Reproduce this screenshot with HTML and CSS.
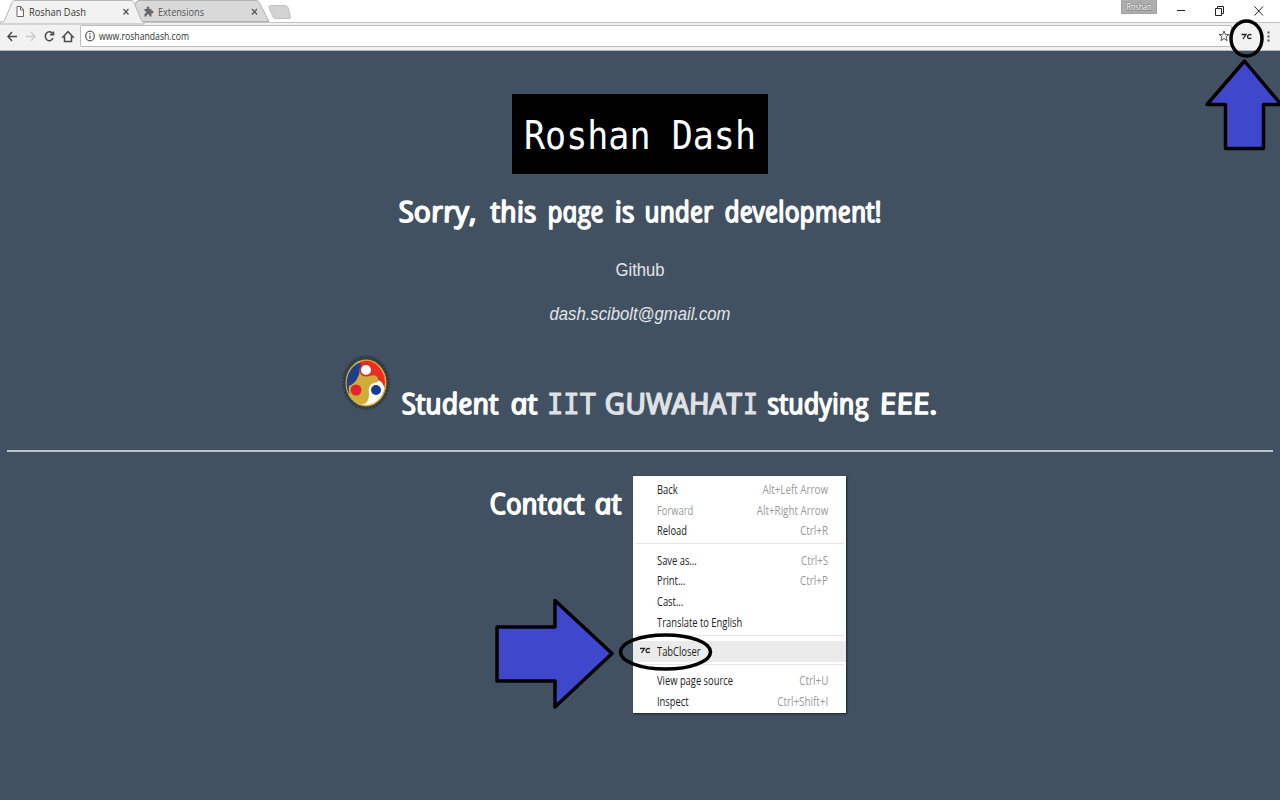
FILE: index.html
```html
<!DOCTYPE html>
<html lang="en">
<head>
<meta charset="utf-8">
<title>Roshan Dash</title>
<link rel="stylesheet" href="styles.css">
</head>
<body>
<header class="browser">
  <div class="tabstrip">
    <svg class="tabs" width="300" height="23" viewBox="0 0 300 23">
      <path class="tab-back" d="M134 22 L136 2 Q137 .5 139 .5 H256 Q258 .5 259 2 L269 21.5 H141z"/>
      <path class="tab-new" d="M270.5 5.5 H285 Q287 5.500 288 7.500 L290.500 17 Q291 18.500 289 18.500 H276 Q274 18.500 273 17 L269 7.500 Q268.500 5.500 270.500 5.500z"/>
      <path class="tab-front" d="M0 22 H2 Q4 22 5 19.500 L12 2.500 Q13 .5 15 .5 H131 Q133 .5 134 2.500 L141 19.500 Q142 22 144 22 V24 H0z"/>
      <path class="line" d="M144 22.500 H300"/>
      <path class="doc" d="M17 6.500 H21 L23.500 9.500 V16.500 H17z M20.500 6.500 V10 H23.500"/>
      <path class="puzzle" d="M144.500 9 H147 Q146 6.500 148 6.500 T149.200 9 H151.500 V11 Q153.500 10 153.500 12 T151.500 13 V16.500 H149.500 Q149.500 14.300 148 14.300 T146.500 16.500 H144.500 V13.800 Q146.200 13.500 146.200 12.300 T144.500 11z"/>
      <path class="close" d="M123.500 9 l5 5.500 m0 -5.500 l-5 5.500 M252 9 l5 5.500 m0 -5.500 l-5 5.500"/>
      <text class="ui" x="29" y="15.500" textLength="57" lengthAdjust="spacingAndGlyphs">Roshan Dash</text>
      <text class="ui muted" x="158" y="15.500" textLength="46" lengthAdjust="spacingAndGlyphs">Extensions</text>
    </svg>
    <div class="user"><svg width="34" height="13"><text x="4.500" y="9.500" textLength="25" lengthAdjust="spacingAndGlyphs">Roshan</text></svg></div>
    <svg class="window-buttons" width="100" height="22" viewBox="1170 0 100 22">
      <path d="M1177 10.500 h8 M1215.500 8.500 h6 v7 h-6z M1217.500 8 v-1.500 h6 v7 h-1.500 M1254.500 6.500 l8.500 9 m0 -9 l-8.500 9"/>
    </svg>
  </div>
  <div class="toolbar">
    <svg class="nav" width="80" height="28" viewBox="0 22 80 28">
      <path d="M17 36.500 H8 M12 32 L8 36.500 L12 41"/>
      <path class="disabled" d="M26 36.500 H35 M31 32 L35 36.500 L31 41"/>
      <path d="M52.500 33.500 A4 4.500 0 1 0 53 38 M53.500 31.500 V34.800 H50"/>
      <path d="M63 37 L68 31.500 L73 37 H71.500 V41.500 H64.500 V37z"/>
    </svg>
    <div class="address">
      <svg width="120" height="20" viewBox="81 26 120 20">
        <ellipse class="info" cx="90" cy="36" rx="4.300" ry="4.800"/>
        <path class="info" d="M90 35.500 v3.200 M90 33 v1.200"/>
        <text class="ui" x="99" y="39.800" textLength="90" lengthAdjust="spacingAndGlyphs">www.roshandash.com</text>
      </svg>
      <svg class="star" width="12" height="12" viewBox="0 0 12 12"><path d="M6 1 L7.300 4.500 H11 L8 6.800 L9.100 10.700 L6 8.500 L2.900 10.700 L4 6.800 L1 4.500 H4.700z"/></svg>
    </div>
    <svg class="extras" width="48" height="28" viewBox="1232 22 48 28">
      <path class="tc" d="M1241.500 34.500 h4.500 l-3 4.500 M1251.500 35 q-3 -1.500 -4 1.500 q0 3 4 1.500"/>
      <path class="dots" d="M1267.500 31.500h2v2h-2z M1267.500 35.500h2v2h-2z M1267.500 39.500h2v2h-2z"/>
    </svg>
  </div>
</header>

<main class="page">
  <h1 class="name"><svg width="256" height="80"><text x="12" y="55" textLength="232" lengthAdjust="spacingAndGlyphs">Roshan Dash</text></svg></h1>

  <h2 class="sorry"><svg width="500" height="40" viewBox="390 193 500 40">
    <g class="comic">
      <text transform="translate(400 221.500) skewX(11)" textLength="78" lengthAdjust="spacingAndGlyphs">Sorry,</text>
      <text transform="translate(492 221.500) skewX(11)" textLength="46" lengthAdjust="spacingAndGlyphs">this</text>
      <text transform="translate(549 221.500) skewX(11)" textLength="56" lengthAdjust="spacingAndGlyphs">page</text>
      <text transform="translate(616 221.500) skewX(11)" textLength="20" lengthAdjust="spacingAndGlyphs">is</text>
      <text transform="translate(646 221.500) skewX(11)" textLength="69" lengthAdjust="spacingAndGlyphs">under</text>
      <text transform="translate(726 221.500) skewX(11)" textLength="157" lengthAdjust="spacingAndGlyphs">development!</text>
    </g>
  </svg></h2>

  <p class="link github"><svg width="60" height="26"><text x="5.500" y="19" textLength="49" lengthAdjust="spacingAndGlyphs">Github</text></svg></p>
  <p class="link email"><svg width="190" height="26"><text x="4.500" y="19" textLength="181" lengthAdjust="spacingAndGlyphs">dash.scibolt@gmail.com</text></svg></p>

  <h2 class="student"><svg width="610" height="76" viewBox="335 350 610 76">
    <ellipse class="ring" cx="366" cy="382.500" rx="22" ry="25.500"/>
    <ellipse cx="366" cy="383" rx="20.500" ry="23.500" fill="#d0ac38"/>
    <ellipse cx="366" cy="383" rx="19" ry="22" fill="#fffef2"/>
    <path d="M361 362 A19 22 0 0 0 349 394 L362 388 L364 366z" fill="#213f87"/>
    <path d="M360 362 A19 22 0 0 1 384.500 388 Q382 378 372 380 L361 366z" fill="#ef2c20"/>
    <path d="M360 368 Q360 374 357 379 Q354 384 349 386 Q348 392 351 397 Q357 405 364 404 Q369 402 369 394 Q367 383 378 382 Q379 374 371 375.500 Q364 377 360 368z" fill="#d0ac38"/>
    <circle cx="366" cy="370" r="5.800" fill="#fff" stroke="#e42c24" stroke-width="1.500"/>
    <circle cx="356" cy="390" r="5.500" fill="#e5232e"/>
    <circle cx="376" cy="390" r="7" fill="#fffef2"/>
    <circle cx="376" cy="390" r="5" fill="#163d91"/>
    <g class="comic">
      <text transform="translate(403 413.500) skewX(11)" textLength="97" lengthAdjust="spacingAndGlyphs">Student</text>
      <text transform="translate(512 413.500) skewX(11)" textLength="27" lengthAdjust="spacingAndGlyphs">at</text>
      <text class="soft mono" transform="translate(547 413.500)" textLength="49" lengthAdjust="spacingAndGlyphs">IIT</text>
      <text class="soft" transform="translate(606 413.500) skewX(11)" textLength="137" lengthAdjust="spacingAndGlyphs">GUWAHAT</text>
      <text class="soft mono" transform="translate(743 413.500)" textLength="15" lengthAdjust="spacingAndGlyphs">I</text>
      <text transform="translate(769 413.500) skewX(11)" textLength="101" lengthAdjust="spacingAndGlyphs">studying</text>
      <text transform="translate(881 413.500) skewX(11)" textLength="58" lengthAdjust="spacingAndGlyphs">EEE.</text>
    </g>
  </svg></h2>

  <hr class="rule">

  <h2 class="contact"><svg width="300" height="40" viewBox="480 485 300 40">
    <g class="comic">
      <text transform="translate(491 513.500) skewX(11)" textLength="95" lengthAdjust="spacingAndGlyphs">Contact</text>
      <text transform="translate(596 513.500) skewX(11)" textLength="27" lengthAdjust="spacingAndGlyphs">at</text>
    </g>
  </svg></h2>
</main>

<nav class="menu">
  <div class="item"><span>Back</span><kbd>Alt+Left Arrow</kbd></div>
  <div class="item off"><span>Forward</span><kbd>Alt+Right Arrow</kbd></div>
  <div class="item"><span>Reload</span><kbd>Ctrl+R</kbd></div>
  <div class="sep"></div>
  <div class="item"><span>Save as...</span><kbd>Ctrl+S</kbd></div>
  <div class="item"><span>Print...</span><kbd>Ctrl+P</kbd></div>
  <div class="item"><span>Cast...</span></div>
  <div class="item"><span>Translate to English</span></div>
  <div class="sep"></div>
  <div class="item active"><svg class="item-icon" width="12" height="8"><path class="tc" d="M1 1.500 h4.500 l-3 4.500 M11 2 q-3 -1.500 -4 1.500 q0 3 4 1.500"/></svg><span>TabCloser</span></div>
  <div class="sep"></div>
  <div class="item"><span>View page source</span><kbd>Ctrl+U</kbd></div>
  <div class="item"><span>Inspect</span><kbd>Ctrl+Shift+I</kbd></div>
</nav>

<svg class="marks" width="1280" height="800">
  <ellipse cx="1246.500" cy="38.500" rx="15.500" ry="17.500"/>
  <ellipse cx="665.500" cy="652" rx="45" ry="17"/>
  <path class="arrow" d="M1244.500 61 L1281 104.500 H1263.500 V148.500 H1225.500 V104.500 H1207z"/>
  <path class="arrow" d="M555 600.500 L612 653.500 L555 707 V681 H497 V627 H555z"/>
</svg>
</body>
</html>
```
FILE: styles.css
```css
* { box-sizing: border-box; }
body {
  margin: 0;
  width: 1280px;
  height: 800px;
  overflow: hidden;
  position: relative;
  background: #425161;
  font-family: "Open Sans", "Noto Sans", sans-serif;
}
h1, h2, p { margin: 0; }
svg { display: block; overflow: visible; }

.browser { height: 51px; background: #f2f2f2; border-bottom: 1px solid #b4b8bc; }
.tabstrip { display: flex; height: 23px; background: #fff; border-bottom: 1px solid #c4c4c4; }
.tabs { flex: none; }
.tab-front { fill: #f2f2f2; stroke: #b5b5b5; }
.tab-back { fill: #d9d9d9; stroke: #b0b0b0; }
.tab-new { fill: #d2d2d2; stroke: #c2c2c2; }
.line { stroke: #c4c4c4; }
.doc { fill: #fff; stroke: #666; }
.puzzle { fill: #666; }
.close { fill: none; stroke: #555; stroke-width: 1.2; }
.ui { font-size: 11.5px; fill: #333; }
.muted { fill: #555; }
.user { height: 14px; margin-left: 821px; background: #adadad; border: 1px solid #a2a2a2; border-top: 0; flex: none; width: 36px; }
.user text { font-size: 8.5px; fill: #fff; stroke: #888; stroke-width: 1.5px; paint-order: stroke; }
.window-buttons { margin-left: 13px; flex: none; fill: none; stroke: #222; }

.toolbar { display: flex; align-items: flex-start; height: 27px; }
.nav { flex: none; margin-top: -1px; fill: none; stroke: #4a4a4a; stroke-width: 1.5; }
.nav .disabled { stroke: #ccc; }
.address {
  display: flex;
  justify-content: space-between;
  align-items: center;
  flex: none;
  width: 1152px;
  height: 22px;
  margin-top: 2px;
  padding-right: 1px;
  background: #fff;
  border: 1px solid #bcbcbc;
  border-radius: 2px;
}
.info { fill: none; stroke: #555; stroke-width: 1.2; }
.star { fill: none; stroke: #555; }
.extras { flex: none; margin-top: -1px; }
.dots { fill: #555; }
.tc { fill: none; stroke: #222; stroke-width: 1.3; }

.page { display: flex; flex-direction: column; align-items: center; padding-top: 43px; }
.name { background: #000; }
.name text { font: 39px "DejaVu Sans Mono", monospace; fill: #fff; }
.sorry { margin-top: 19px; }
.comic {
  font: italic 400 29px "Open Sans", "Noto Sans", sans-serif;
  fill: #fff;
  stroke: #fff;
  stroke-width: 1.5px;
  stroke-linejoin: round;
}
.comic .soft { fill: #dfe1e4; stroke: #dfe1e4; }
.comic .mono { font: 28px "DejaVu Sans Mono", monospace; stroke-width: 1px; }
.link text { font: 19px "Liberation Sans", Arial, sans-serif; fill: #e3e6ea; }
.github { margin-top: 24px; }
.email { margin-top: 18px; }
.email text { font-style: italic; }
.student { margin-top: 23px; }
.ring { fill: #3a4650; stroke: #323b43; stroke-width: 3.5px; stroke-dasharray: 2.5 1; }
.rule { width: 1266px; height: 2px; margin: 24px 0 0; border: 0; background: #b9c4ca; }
.contact { margin-top: 33px; align-self: flex-start; padding-left: 480px; }

.menu {
  position: absolute;
  left: 633px;
  top: 476px;
  width: 213px;
  height: 237px;
  padding-top: 3px;
  background: #fff;
  box-shadow: 1px 1px 2px rgba(0, 0, 0, 0.6);
  font-size: 12px;
  color: #222;
}
.item { position: relative; display: flex; justify-content: space-between; align-items: center; height: 20.8px; padding: 0 18px 0 23.5px; white-space: nowrap; }
.item span { transform: scaleX(0.78); transform-origin: left; }
.item kbd { font: inherit; color: #999; transform: scaleX(0.82); transform-origin: right; }
.off { color: #999; }
.active { background: #ebebeb; }
.item-icon { position: absolute; left: 6px; top: 6px; }
.sep { height: 1px; margin: 2px 2px 5.3px; background: #e6e6e6; }
.marks { position: absolute; left: 0; top: 0; overflow: hidden; fill: none; stroke: #000; stroke-width: 3.5px; }
.arrow { fill: #3f48cc; stroke-linejoin: round; }
```
